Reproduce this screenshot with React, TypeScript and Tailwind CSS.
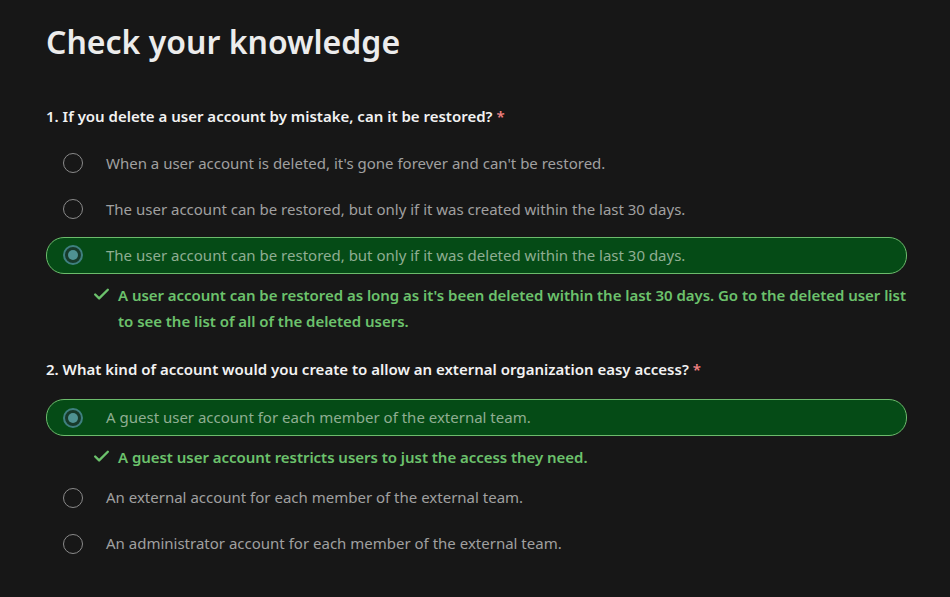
import { Check } from "lucide-react";

type Option = {
  text: string;
  selected?: boolean;
  feedback?: string;
};

type Question = {
  title: string;
  options: Option[];
};

const questions: Question[] = [
  {
    title: "1. If you delete a user account by mistake, can it be restored?",
    options: [
      { text: "When a user account is deleted, it's gone forever and can't be restored." },
      { text: "The user account can be restored, but only if it was created within the last 30 days." },
      {
        text: "The user account can be restored, but only if it was deleted within the last 30 days.",
        selected: true,
        feedback:
          "A user account can be restored as long as it's been deleted within the last 30 days. Go to the deleted user list to see the list of all of the deleted users.",
      },
    ],
  },
  {
    title: "2. What kind of account would you create to allow an external organization easy access?",
    options: [
      {
        text: "A guest user account for each member of the external team.",
        selected: true,
        feedback: "A guest user account restricts users to just the access they need.",
      },
      { text: "An external account for each member of the external team." },
      { text: "An administrator account for each member of the external team." },
    ],
  },
];

function Radio({ selected }: { selected?: boolean }) {
  if (selected) {
    return (
      <span className="flex size-[20px] items-center justify-center rounded-full border-2 border-[#3f8080] bg-[#173a2a]">
        <span className="size-[10px] rounded-full bg-[#4f9292]" />
      </span>
    );
  }
  return <span className="size-[20px] rounded-full border-[1.5px] border-[#8a8a8a]" />;
}

function OptionRow({ option }: { option: Option }) {
  return (
    <div>
      <div
        className={
          option.selected
            ? "flex h-[37px] items-center rounded-[18px] border border-[#6cbb6c] bg-[#054b16]"
            : "flex h-[37px] items-center border border-transparent"
        }
      >
        <div className="flex w-[59px] pl-[16px]">
          <Radio selected={option.selected} />
        </div>
        <span
          className={
            option.selected
              ? "text-[15px] text-[#8fae92]"
              : "text-[15px] text-[#a0a0a0]"
          }
        >
          {option.text}
        </span>
      </div>
      {option.feedback && (
        <div className="mt-[8px] flex gap-[7px] pl-[46px]">
          <Check className="mt-[3px] size-[19px] shrink-0 text-[#6cc26c]" strokeWidth={3} />
          <p className="text-[15px] font-semibold leading-[26px] tracking-[-0.04px] text-[#6cc26c]">
            {option.feedback}
          </p>
        </div>
      )}
    </div>
  );
}

export default function App() {
  return (
    <div
      className="min-h-[597px] bg-[#171717] pt-[20px] pr-[43px] pb-[30px] pl-[46px]"
      style={{ fontFamily: '"Segoe UI", "Noto Sans", sans-serif' }}
    >
      <h1 className="text-[32px] font-semibold leading-[44px] text-[#ececec]">Check your knowledge</h1>
      <div className="mt-[41px] flex flex-col gap-[24px]">
        {questions.map((q, i) => (
          <div key={q.title}>
            <h2 className="text-[15px] font-semibold text-[#f2f2f2]">
              {q.title} <span className="text-[#f08080]">*</span>
            </h2>
            <div className={i === 0 ? "mt-[17px] flex flex-col gap-[9px]" : "mt-[19px] flex flex-col gap-[9px]"}>
              {q.options.map((o) => (
                <OptionRow key={o.text} option={o} />
              ))}
            </div>
          </div>
        ))}
      </div>
    </div>
  );
}
